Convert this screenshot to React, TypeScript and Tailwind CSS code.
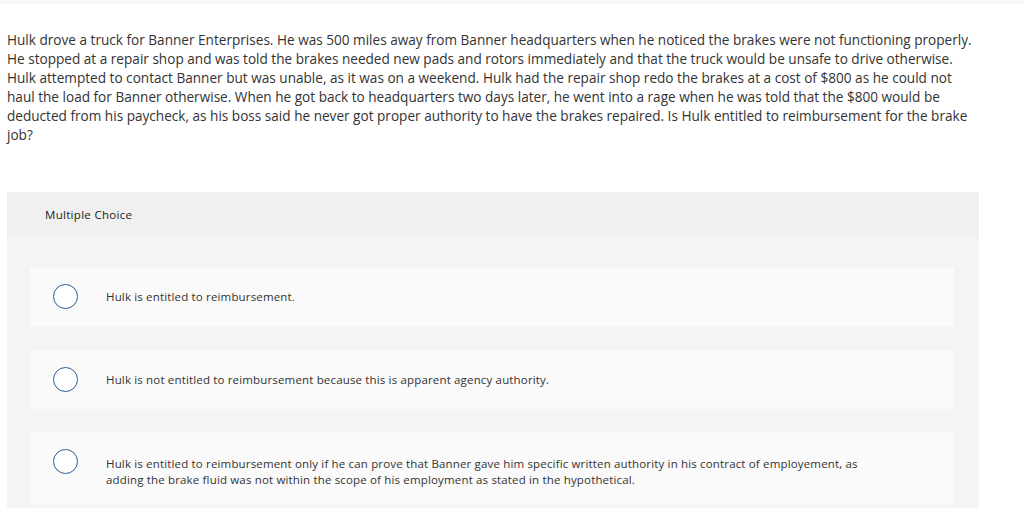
import type { FC } from 'react'

const QUESTION: string[] = [
  'Hulk drove a truck for Banner Enterprises. He was 500 miles away from Banner headquarters when he noticed the brakes were not functioning properly.',
  'He stopped at a repair shop and was told the brakes needed new pads and rotors immediately and that the truck would be unsafe to drive otherwise.',
  'Hulk attempted to contact Banner but was unable, as it was on a weekend. Hulk had the repair shop redo the brakes at a cost of $800 as he could not',
  'haul the load for Banner otherwise. When he got back to headquarters two days later, he went into a rage when he was told that the $800 would be',
  'deducted from his paycheck, as his boss said he never got proper authority to have the brakes repaired. Is Hulk entitled to reimbursement for the brake',
  'job?',
]

const OPTIONS: string[][] = [
  ['Hulk is entitled to reimbursement.'],
  ['Hulk is not entitled to reimbursement because this is apparent agency authority.'],
  [
    'Hulk is entitled to reimbursement only if he can prove that Banner gave him specific written authority in his contract of employement, as',
    'adding the brake fluid was not within the scope of his employment as stated in the hypothetical.',
  ],
]

const Option: FC<{ lines: string[] }> = ({ lines }) => {
  const tall = lines.length > 1
  return (
    <div
      className={`flex items-start rounded-[3px] bg-[#fafafa] pl-[23px] pr-[40px] pt-[17px] ${tall ? 'pb-[17px]' : 'pb-[17px]'}`}
    >
      <span className="block h-[25px] w-[25px] shrink-0 rounded-full border border-[#2d5c8e] bg-white" />
      <p
        className={`ml-[28px] whitespace-nowrap text-[11.5px] leading-[16px] tracking-[0.16px] text-[#333] ${tall ? 'mt-[7px]' : 'mt-[5px]'}`}
      >
        {lines.map((l, i) => (
          <span key={i} className="block">
            {l}
          </span>
        ))}
      </p>
    </div>
  )
}

export default function App() {
  return (
    <div className="h-[513px] w-[1024px] overflow-hidden bg-white font-['Open_Sans',sans-serif]">
      <div className="h-[4px] bg-[#f7f7f7]" />
      <p className="mt-[26px] whitespace-nowrap px-[7px] text-[13.6px] leading-[19px] text-[#333]">
        {QUESTION.map((l, i) => (
          <span key={i} className="block">
            {l}
          </span>
        ))}
      </p>
      <div className="ml-[7px] mt-[48px] w-[972px] bg-[#f4f4f4]">
        <div className="flex h-[45px] items-center bg-[#f0f0f0] pl-[38px] text-[11.5px] tracking-[0.3px] text-[#222]">
          Multiple Choice
        </div>
        <div className="flex flex-col gap-[23.5px] pl-[23px] pr-[25px] pt-[30px] pb-[3px]">
          {OPTIONS.map((l, i) => (
            <Option key={i} lines={l} />
          ))}
        </div>
      </div>
    </div>
  )
}
